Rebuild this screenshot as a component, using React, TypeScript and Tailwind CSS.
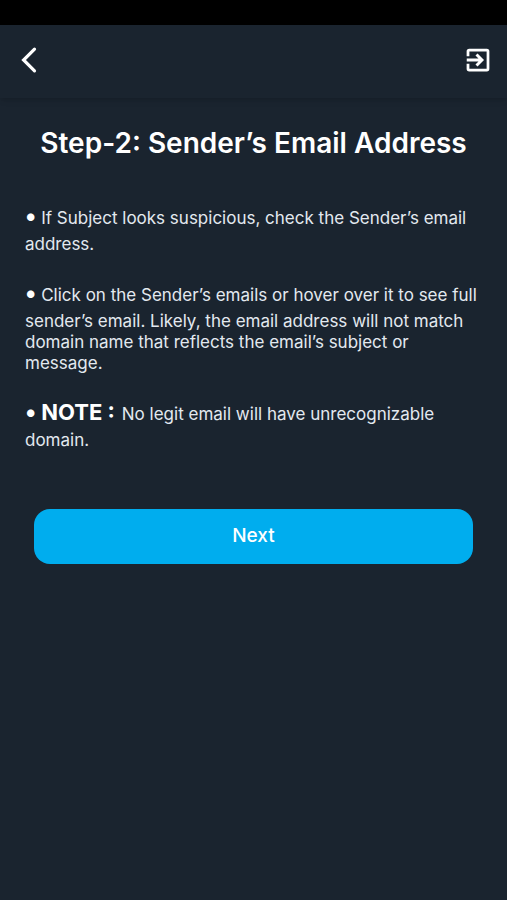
import type { ReactNode } from "react";

interface TipProps {
  label?: string;
  children: ReactNode;
}

const BackIcon = () => (
  <svg viewBox="0 0 30 30" className="size-[30px]" fill="none" stroke="currentColor" aria-hidden="true">
    <path d="M20.5 4.2 9.6 15l10.9 10.8" strokeWidth="3.2" strokeLinecap="round" />
  </svg>
);

const ExitIcon = () => (
  <svg viewBox="0 0 24 24" className="size-[30px]" fill="none" stroke="currentColor" aria-hidden="true">
    <path d="M4 9V5a1 1 0 0 1 1-1h14a1 1 0 0 1 1 1v14a1 1 0 0 1-1 1H5a1 1 0 0 1-1-1v-4" strokeWidth="2.2" />
    <path d="M3 12h11.5M10.8 7.6l4.4 4.4-4.4 4.4" strokeWidth="2.3" />
  </svg>
);

const Tip = ({ label, children }: TipProps) => {
  return (
    <p>
      <span className="text-2xl leading-[37px] font-bold text-white">•</span>{" "}
      {label && <strong className="mr-[7px] text-[22px] leading-[31px] font-bold text-white">{label}</strong>}
      {children}
    </p>
  );
};

const App = () => {
  return (
    <div className="flex min-h-screen flex-col bg-[#1a242f] font-['Inter',sans-serif]">
      <div className="h-[25px] bg-black" />
      <header className="flex h-[73px] items-center justify-between px-[14px] pb-1 text-white shadow-md">
        <button type="button" aria-label="Back">
          <BackIcon />
        </button>
        <button type="button" aria-label="Exit">
          <ExitIcon />
        </button>
      </header>

      <main className="flex flex-col px-[25px] pt-7">
        <h1 className="text-center text-[28px] leading-[34px] font-semibold text-white">
          Step-2: Sender’s Email Address
        </h1>

        <div className="mt-[37px] flex flex-col gap-[19px] text-[17px] leading-[21px] text-[#e3e9ef]">
          <Tip>If Subject looks suspicious, check the Sender’s email address.</Tip>
          <Tip>
            Click on the Sender’s emails or hover over it to see full sender’s email. Likely, the email address will
            not match domain name that reflects the email’s subject or message.
          </Tip>
          <Tip label="NOTE :">No legit email will have unrecognizable domain.</Tip>
        </div>

        <button
          type="button"
          className="mx-[9px] mt-[58px] h-[55px] rounded-2xl bg-[#00adee] text-[19px] font-medium text-white"
        >
          Next
        </button>
      </main>
    </div>
  );
};

export default App;
